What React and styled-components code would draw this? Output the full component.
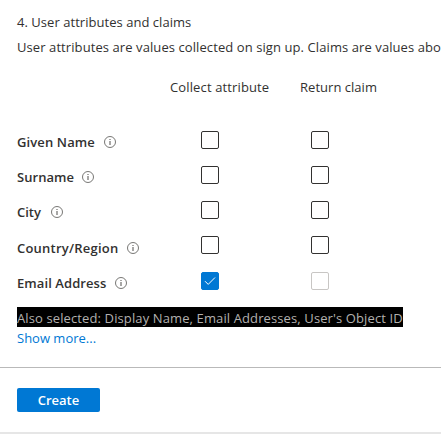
import React from "react";
import styled, { createGlobalStyle } from "styled-components";

const GlobalStyle = createGlobalStyle`
  *, *::before, *::after { box-sizing: border-box; }
  html, body { margin: 0; background: #fff; overflow: hidden; }
  body {
    font-family: "Segoe UI", "Open Sans", "Noto Sans", sans-serif;
    font-size: 13px;
    line-height: 20px;
    color: #323130;
  }
`;

const Page = styled.main`
  width: 441px;
  height: 434px;
  overflow: hidden;
  display: flex;
  flex-direction: column;
`;

const Section = styled.section`
  padding: 12px 0 0 17px;
  height: 367px;
  flex: none;
`;

const Line = styled.p`
  margin: 0 0 5px;
  white-space: nowrap;
  letter-spacing: ${(p) => p.$track || 0}px;
`;

const Header = styled.div`
  display: grid;
  grid-template-columns: 153px 130px 1fr;
  height: 69px;
  padding-top: 15px;
  align-items: start;
`;

const HeaderText = styled.span`
  white-space: nowrap;
  letter-spacing: ${(p) => p.$track || 0}px;
`;

const Attributes = styled.div`
  display: flex;
  flex-direction: column;
  height: 176px;
`;

const Row = styled.div`
  display: grid;
  grid-template-columns: 184px 110px 1fr;
  align-items: start;
  flex: none;
  height: 35.15px;
`;

const Label = styled.div`
  display: flex;
  align-items: center;
  gap: 9px;
  height: 22.2px;
  font-weight: 600;
  white-space: nowrap;
`;

const LabelText = styled.span`
  width: ${(p) => p.$width}px;
  letter-spacing: ${(p) => p.$track || 0}px;
`;

const Box = styled.span`
  display: flex;
  align-items: center;
  justify-content: center;
  width: 18px;
  height: 18px;
  border: 1px solid ${(p) => (p.$checked ? "#0078d4" : p.$disabled ? "#c8c6c4" : "#323130")};
  border-radius: 2px;
  background: ${(p) => (p.$checked ? "#0078d4" : "#fff")};
`;

const Selected = styled.div`
  width: 386px;
  height: 20px;
  line-height: 22px;
  background: #000;
  color: #b3b1af;
  white-space: nowrap;
  letter-spacing: ${(p) => p.$track || 0}px;
`;

const More = styled.a`
  display: block;
  line-height: 22px;
  color: #0078d4;
`;

const Footer = styled.footer`
  flex: 1;
  border-top: 1px solid #b9b9b9;
  border-bottom: 2px solid #e6e6e6;
  padding: 20px 17px 0;
`;

const Button = styled.button`
  display: block;
  width: 83px;
  height: 24px;
  padding: 0;
  border: 0;
  border-radius: 2px;
  background: #0078d4;
  color: #fff;
  font: 600 13px/24px "Segoe UI", "Open Sans", sans-serif;
`;

const InfoIcon = () => (
  <svg width="12" height="12" viewBox="0 0 12 12" fill="none">
    <circle cx="6" cy="6" r="5.5" stroke="#605e5c" strokeWidth="0.85" />
    <path d="M6 5v4M6 3v1" stroke="#605e5c" strokeWidth="1.1" />
  </svg>
);

const CheckIcon = () => (
  <svg width="12" height="10" viewBox="0 0 12 10" fill="none">
    <path d="M1 5.2 4.2 8.4 11 1.5" stroke="#fff" strokeWidth="1" />
  </svg>
);

const attributes = [
  { name: "Given Name", width: 78, track: 0.12 },
  { name: "Surname", width: 56, track: 0.04 },
  { name: "City", width: 25, track: 0 },
  { name: "Country/Region", width: 101, track: 0.22 },
  { name: "Email Address", width: 89, track: 0.08, collected: true, claimDisabled: true },
];

export default function App() {
  return (
    <Page>
      <GlobalStyle />
      <Section>
        <Line $track={0.04}>4. User attributes and claims</Line>
        <Line $track={0.085}>User attributes are values collected on sign up. Claims are values abo</Line>
        <Header>
          <span />
          <HeaderText $track={0.13}>Collect attribute</HeaderText>
          <HeaderText $track={0.03}>Return claim</HeaderText>
        </Header>
        <Attributes>
          {attributes.map((a) => (
            <Row key={a.name}>
              <Label>
                <LabelText $width={a.width} $track={a.track}>{a.name}</LabelText>
                <InfoIcon />
              </Label>
              <Box $checked={a.collected}>{a.collected && <CheckIcon />}</Box>
              <Box $disabled={a.claimDisabled} />
            </Row>
          ))}
        </Attributes>
        <Selected $track={0.115}>Also selected: Display Name, Email Addresses, User's Object ID</Selected>
        <More>Show more...</More>
      </Section>
      <Footer>
        <Button>Create</Button>
      </Footer>
    </Page>
  );
}
